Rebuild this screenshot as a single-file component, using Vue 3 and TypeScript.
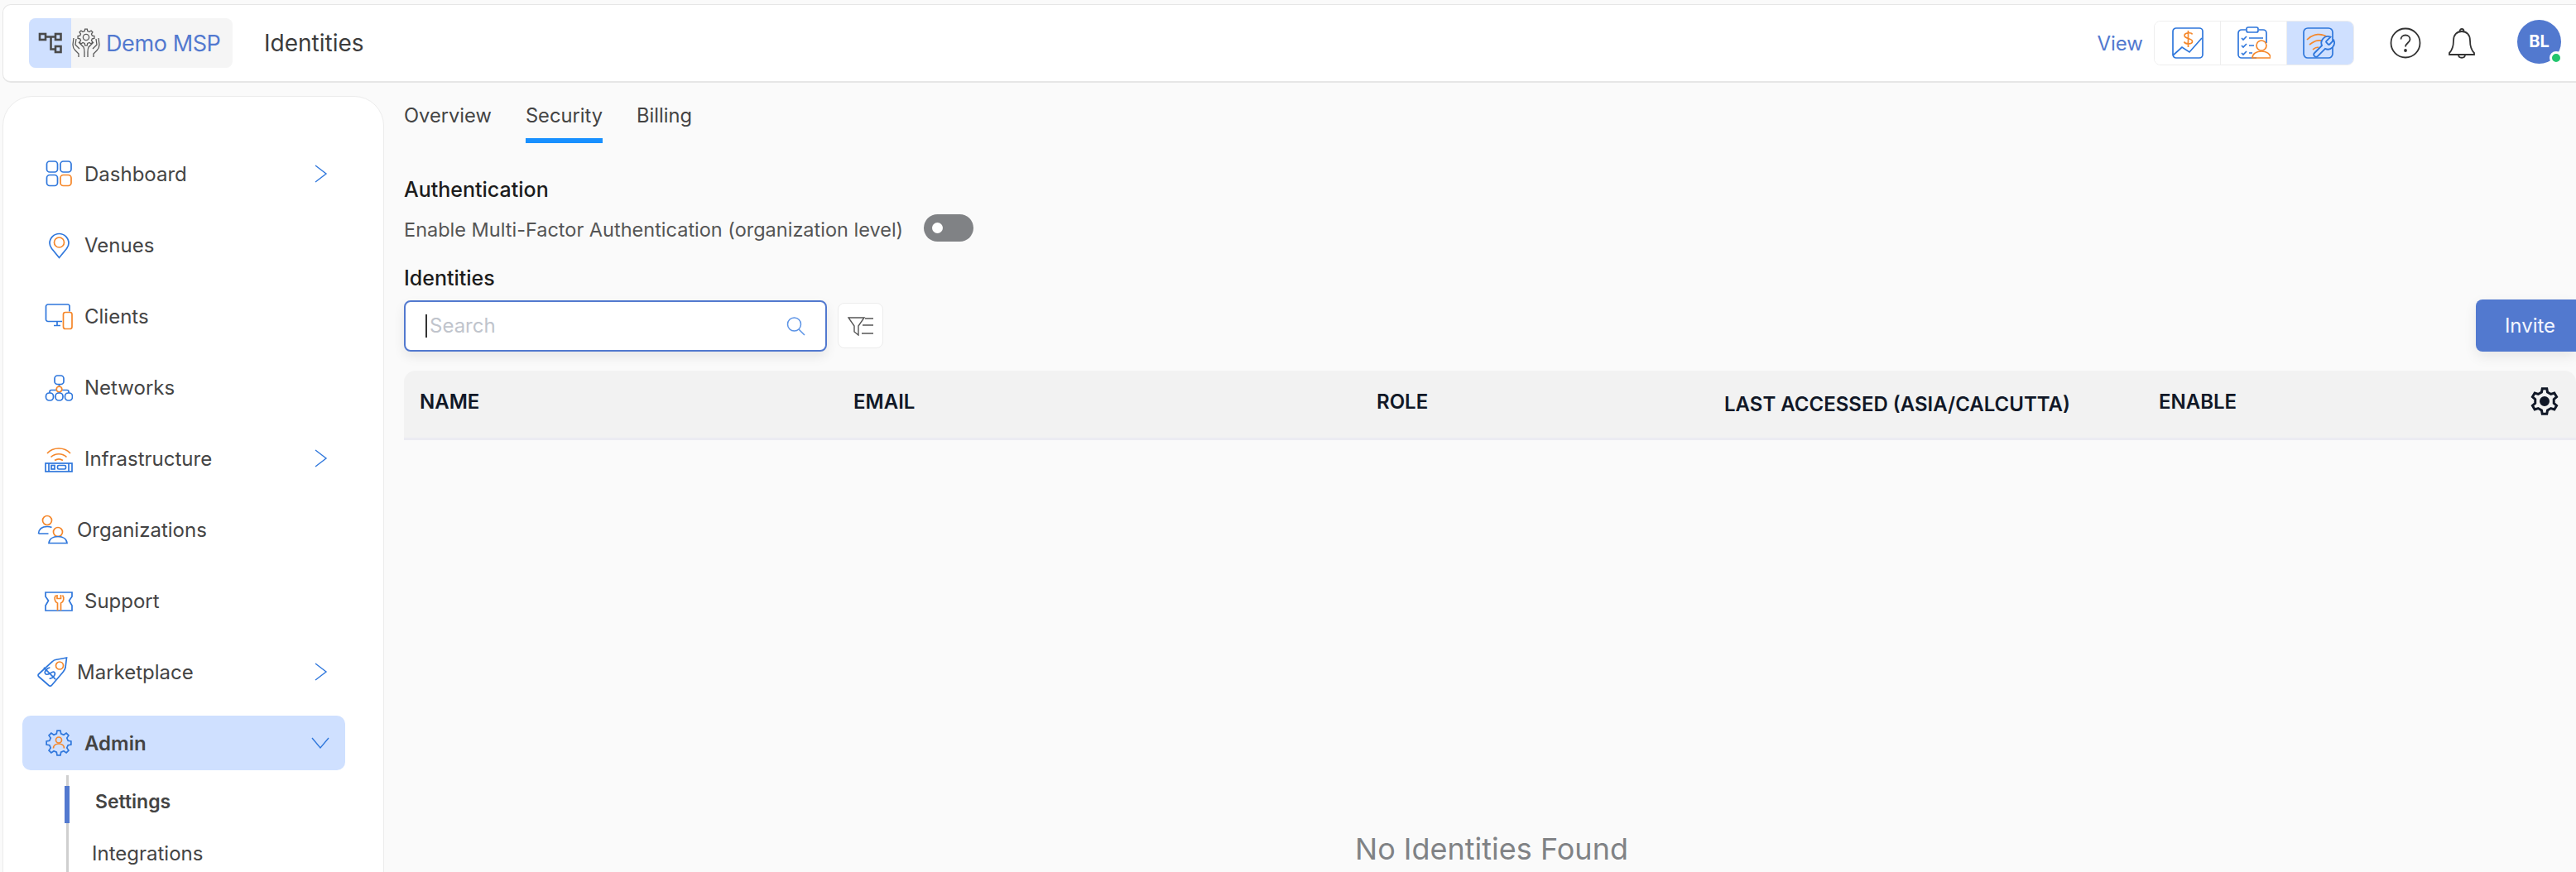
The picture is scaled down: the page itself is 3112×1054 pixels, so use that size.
<template>
  <div class="page">
    <header class="topbar">
      <div class="crumb">
        <div class="crumb-toggle">
          <svg width="30" height="26" viewBox="0 0 30 26" fill="none" stroke="#4a4a4a" stroke-width="2.6">
            <rect x="2" y="2" width="7" height="7" />
            <rect x="21" y="2" width="6.5" height="7" />
            <rect x="21" y="17" width="6.5" height="7" />
            <path d="M9 5.5H21M15.5 5.5V20.5H21" />
          </svg>
        </div>
        <svg class="crumb-logo" width="34" height="36" viewBox="0 0 34 36" fill="none" stroke="#5a5a5a" stroke-width="1.3">
          <path :d="gearPath(17, 11, 10, 7.6, 8)" />
          <circle cx="17" cy="11" r="3.6" />
          <path d="M2 12 1 20c0 3 1 5 3 7l4 4v4M5 13l-1 7 5 5M8 17l6 6c1 2 1 4 1 6v6M32 12l1 8c0 3-1 5-3 7l-4 4v4M29 13l1 7-5 5M26 17l-6 6c-1 2-1 4-1 6v6" />
        </svg>
        <span class="crumb-name">Demo MSP</span>
      </div>
      <h1 class="page-title">Identities</h1>
      <div class="topbar-right">
        <span class="view-label">View</span>
        <div class="view-group">
          <button class="view-btn">
            <svg width="38" height="40" viewBox="0 0 38 40" fill="none" stroke="#2f77dc" stroke-width="1.7">
              <rect x="1" y="2" width="36" height="36" rx="4" />
              <path d="M1 35 12 25l9 6 15-17" />
              <path d="M24.500 9.500c-1-2.500-9.500-2.500-9.500 1.500s9.500 3 9.500 7-8.500 3.500-10 .5M19.500 5v20" stroke="#f5872a" />
            </svg>
          </button>
          <button class="view-btn">
            <svg width="40" height="40" viewBox="0 0 40 40" fill="none" stroke="#2f77dc" stroke-width="1.7">
              <path d="M10 4H5a4 4 0 0 0-4 4v26a4 4 0 0 0 4 4h18M26 4h5a4 4 0 0 1 4 4v12" />
              <rect x="11" y="1" width="14" height="6" rx="2" />
              <path d="M5 14l2 2 4-4M5 23l2 2 4-4M5 32l2 2 4-4M14 14H31M14 23H20M14 32H18" />
              <circle cx="29" cy="23" r="6" stroke="#f5872a" />
              <path d="M18 38c0-5 5-8 11-8s11 3 11 8Z" stroke="#f5872a" />
            </svg>
          </button>
          <button class="view-btn active">
            <svg width="42" height="40" viewBox="0 0 42 40" fill="none" stroke="#2f77dc" stroke-width="1.7">
              <rect x="1" y="2" width="35" height="36" rx="5" />
              <path d="M5 16C13 8 23 8 30 13M8 22c6-5 12-6 17-4M12 28c2-2 4-3 7-3" stroke="#f5872a" />
              <path
                transform="translate(9.400 9.400) scale(1.3)"
                stroke-width="1.4"
                fill="#cfe0ff"
                d="M14.700 6.300a1 1 0 0 0 0 1.400l1.600 1.600a1 1 0 0 0 1.400 0l3.770-3.770a6 6 0 0 1-7.940 7.940l-6.910 6.910a2.120 2.120 0 0 1-3-3l6.910-6.910a6 6 0 0 1 7.940-7.940l-3.760 3.760z"
              />
            </svg>
          </button>
        </div>
        <svg class="help" width="38" height="38" viewBox="0 0 38 38" fill="none" stroke="#333" stroke-width="1.8">
          <circle cx="19" cy="19" r="17.500" />
          <path d="M13.500 14.500c0-3 2.500-5 5.500-5s5.500 2 5.500 5c0 4-5.500 4.500-5.500 9" />
          <circle cx="19" cy="28" r="1" fill="#333" />
        </svg>
        <svg class="bell" width="34" height="38" viewBox="0 0 34 38" fill="none" stroke="#333" stroke-width="1.8">
          <path d="M17 5c-6 0-10 4-10 11 0 7-1 11-5 15v2h30v-2c-4-4-5-8-5-15 0-7-4-11-10-11Z" />
          <path d="M14.500 5c0-4 5-4 5 0M13 33c0 5 8 5 8 0" />
        </svg>
        <div class="avatar">
          BL
          <span class="status-dot"></span>
        </div>
      </div>
    </header>

    <div class="body">
      <aside class="sidebar">
        <div
          v-for="item in navItems"
          :key="item.label"
          :class="['nav-item', { shifted: item.shifted, active: item.active }]"
        >
          <svg v-if="item.icon === 'dashboard'" class="nav-icon" viewBox="0 0 34 34" fill="none" stroke="#2f77dc" stroke-width="1.7">
            <rect x="2.500" y="2" width="13" height="13" rx="3.500" />
            <rect x="19" y="2" width="13" height="13" rx="3.500" />
            <rect x="2.500" y="18.500" width="13" height="13" rx="3.500" />
            <rect x="19" y="18.500" width="13" height="13" rx="3.500" stroke="#f5872a" />
          </svg>
          <svg v-else-if="item.icon === 'venues'" class="nav-icon" viewBox="0 0 34 34" fill="none" stroke="#2f77dc" stroke-width="1.7">
            <path d="M17.500 32.500 8.500 21.500C6.800 19.200 6 17.200 6 15a11.500 11.500 0 0 1 23 0c0 2.200-.8 4.200-2.500 6.500Z" />
            <circle cx="17.500" cy="14" r="6" stroke="#f5872a" />
          </svg>
          <svg v-else-if="item.icon === 'clients'" class="nav-icon" viewBox="0 0 34 34" fill="none" stroke="#2f77dc" stroke-width="1.7">
            <path d="M21 23.500H4a2.500 2.500 0 0 1-2.500-2.500V5.500A2.500 2.500 0 0 1 4 3h24a2.500 2.500 0 0 1 2 1.500v7" />
            <path d="M15 24v4M11 28.500h8" />
            <rect x="22.500" y="12.500" width="10.500" height="20" rx="2.500" stroke="#f5872a" />
          </svg>
          <svg v-else-if="item.icon === 'networks'" class="nav-icon" viewBox="0 0 34 34" fill="none" stroke="#2f77dc" stroke-width="1.7">
            <rect x="12" y="3" width="11" height="10.500" rx="3.500" />
            <path d="M6 24v-1.500a2 2 0 0 1 2-2h6.500M20.500 20.500H27a2 2 0 0 1 2 2V24M17.500 13.500V16M17.500 23v1" />
            <circle cx="17.500" cy="19.500" r="3.300" stroke="#f5872a" />
            <rect x="1.500" y="24" width="9" height="9" rx="4" />
            <rect x="13" y="24" width="9" height="9" rx="4" />
            <rect x="24.500" y="24" width="9" height="9" rx="4" />
          </svg>
          <svg v-else-if="item.icon === 'infrastructure'" class="nav-icon" viewBox="0 0 34 34" fill="none" stroke="#2f77dc" stroke-width="1.7">
            <path d="M3 11C10 3 24 3 31 11M7.500 15.500c5-5 14-5 19 0M12 19.500c3-2 7-2 10 0" stroke="#f5872a" />
            <rect x="1" y="23" width="32" height="10" />
            <path d="M5 23v10M29 23v10" />
            <rect x="8" y="25.500" width="4" height="4.500" />
            <rect x="15.500" y="25.500" width="10" height="4.500" rx="1.500" />
          </svg>
          <svg v-else-if="item.icon === 'organizations'" class="nav-icon wide" viewBox="0 0 37 34" fill="none" stroke="#2f77dc" stroke-width="1.7">
            <circle cx="12" cy="6" r="5.500" stroke="#f5872a" />
            <path d="M1.500 22C2 16 6 13.500 12 13.500c2 0 4 .3 5.500 1M1.500 22h12" />
            <circle cx="25" cy="20" r="5.500" stroke="#f5872a" />
            <path d="M14 33.500c.5-5 5-8 11-8s10.500 3 11 8Z" />
          </svg>
          <svg v-else-if="item.icon === 'support'" class="nav-icon" viewBox="0 0 34 34" fill="none" stroke="#2f77dc" stroke-width="1.7">
            <path d="M1 7H33V12L29.500 17 33 23V29H1V23L4.500 17 1 12Z" />
            <path d="M13.500 10.500c-2.500 3-1.500 8 2 9.500v9M21.500 10.500c2.500 3 1.500 8-2 9.500v9M15 10v4.500h4.500V10" stroke="#f5872a" />
          </svg>
          <svg v-else-if="item.icon === 'marketplace'" class="nav-icon wide" viewBox="0 0 37 36" fill="none" stroke="#2f77dc" stroke-width="1.7">
            <path d="M35.500 1 22 3.500c-1.500.3-2.500 1-3.500 2L2 20.500c-1.300 1-1.300 2.500 0 3.500l12 10.500c1.300 1 2.500 1 3.500-.3L31 18.500c1.500-1.700 2.500-3.500 3-5.500Z" />
            <circle cx="27" cy="10.500" r="4.500" stroke="#f5872a" />
            <g transform="rotate(-45 15 20)">
              <path d="M20 15.500c-1-2-9-2.500-9 1.500s9 2.500 9 6-8 4-9.500 1M15 10v20" />
            </g>
          </svg>
          <svg v-else-if="item.icon === 'admin'" class="nav-icon" viewBox="0 0 34 34" fill="none" stroke="#2f77dc" stroke-width="1.7">
            <path :d="gearPath(17, 17, 15, 11.500, 8)" />
            <circle cx="17" cy="13.500" r="3.500" stroke="#f5872a" />
            <path d="M10.500 23.500c0-3.500 3-5.500 6.500-5.500s6.500 2 6.500 5.500" stroke="#f5872a" />
          </svg>
          <span class="nav-label">{{ item.label }}</span>
          <svg v-if="item.chevron === 'right'" class="chevron" width="22" height="24" viewBox="0 0 22 24" fill="none" stroke="#2f77dc" stroke-width="1.4">
            <path d="M5 2 18 12 5 22" />
          </svg>
          <svg v-else-if="item.chevron === 'down'" class="chevron" width="22" height="24" viewBox="0 0 22 24" fill="none" stroke="#2f77dc" stroke-width="1.4">
            <path d="M1 6 11 18 21 6" />
          </svg>
        </div>
        <div class="sub-nav">
          <div class="sub-item current">Settings</div>
          <div class="sub-item">Integrations</div>
        </div>
      </aside>

      <main class="content">
        <nav class="tabs">
          <span v-for="tab in tabs" :key="tab" :class="['tab', { selected: tab === activeTab }]">{{ tab }}</span>
        </nav>
        <h2 class="section-title">Authentication</h2>
        <div class="mfa-row">
          <span class="mfa-label">Enable Multi-Factor Authentication (organization level)</span>
          <span class="switch"><span class="switch-knob"></span></span>
        </div>
        <h2 class="section-title identities">Identities</h2>
        <div class="toolbar">
          <div class="search">
            <span class="caret"></span>
            <input class="search-input" type="text" placeholder="Search" />
            <svg width="24" height="24" viewBox="0 0 24 24" fill="none" stroke="#5b93e6" stroke-width="1.5">
              <circle cx="10.500" cy="10" r="8" />
              <path d="M16 16l7 7" />
            </svg>
          </div>
          <button class="filter-btn">
            <svg width="32" height="24" viewBox="0 0 32 24" fill="none" stroke="#555" stroke-width="1.4">
              <path d="M1 2H20L13 12V23L8 19V12Z" />
              <path d="M21 3H31M18 11H31M17 21H31" />
            </svg>
          </button>
          <button class="invite-btn">Invite</button>
        </div>
        <div class="table-head">
          <span class="col-name">NAME</span>
          <span class="col-email">EMAIL</span>
          <span class="col-role">ROLE</span>
          <span class="col-access">LAST ACCESSED (ASIA/CALCUTTA)</span>
          <span class="col-enable">ENABLE</span>
          <svg class="table-gear" width="34" height="34" viewBox="0 0 34 34" fill="none" stroke="#111827" stroke-width="3">
            <path :d="gearPath(17, 17, 15.500, 11.500, 6)" />
            <circle cx="17" cy="17" r="4.500" fill="#111827" />
          </svg>
        </div>
        <div class="empty">No Identities Found</div>
      </main>
    </div>
  </div>
</template>

<script setup lang="ts">
interface NavItem {
  label: string;
  icon: string;
  chevron?: 'right' | 'down';
  shifted?: boolean;
  active?: boolean;
}

const navItems: NavItem[] = [
  { label: 'Dashboard', icon: 'dashboard', chevron: 'right' },
  { label: 'Venues', icon: 'venues' },
  { label: 'Clients', icon: 'clients' },
  { label: 'Networks', icon: 'networks' },
  { label: 'Infrastructure', icon: 'infrastructure', chevron: 'right' },
  { label: 'Organizations', icon: 'organizations', shifted: true },
  { label: 'Support', icon: 'support' },
  { label: 'Marketplace', icon: 'marketplace', chevron: 'right', shifted: true },
  { label: 'Admin', icon: 'admin', chevron: 'down', active: true }
];

const tabs = ['Overview', 'Security', 'Billing'];
const activeTab = 'Security';

// cog outline, used by the logo, the admin item and the table settings
function gearPath(cx: number, cy: number, outer: number, inner: number, teeth: number): string {
  const step = (Math.PI * 2) / teeth;
  const parts: string[] = [];
  for (let i = 0; i < teeth; i++) {
    const a = i * step - Math.PI / 2;
    const points: [number, number][] = [
      [inner, a - step * 0.3],
      [outer, a - step * 0.17],
      [outer, a + step * 0.17],
      [inner, a + step * 0.3]
    ];
    for (const [r, t] of points) {
      const x = (cx + r * Math.cos(t)).toFixed(2);
      const y = (cy + r * Math.sin(t)).toFixed(2);
      parts.push(`${parts.length ? 'L' : 'M'}${x} ${y}`);
    }
  }
  return parts.join(' ') + ' Z';
}
</script>

<style>
html,
body {
  margin: 0;
  background: #fafafa;
}
</style>

<style scoped>
.page {
  height: 1054px;
  overflow: hidden;
  background: #fafafa;
  font-family: Inter, "Liberation Sans", sans-serif;
  color: #444;
  box-sizing: border-box;
  padding-top: 5px;
}

.topbar {
  height: 95px;
  margin-left: 3px;
  box-sizing: border-box;
  display: flex;
  align-items: center;
  background: #fff;
  border: 1px solid #e6e6e6;
  border-bottom-width: 2px;
  border-right: none;
  border-radius: 10px 0 0 10px;
  padding-left: 31px;
}

.crumb {
  display: flex;
  align-items: center;
  width: 246px;
  height: 60px;
  background: #f5f5f5;
  border-radius: 8px;
  overflow: hidden;
}

.crumb-toggle {
  width: 51px;
  height: 100%;
  background: #cfe0ff;
  display: flex;
  align-items: center;
  justify-content: center;
}

.crumb-logo {
  margin-left: 1px;
}

.crumb-name {
  margin-left: 7px;
  font-size: 27px;
  color: #5279cf;
  letter-spacing: -0.4px;
}

.page-title {
  margin: 0 0 0 38px;
  font-size: 28px;
  font-weight: 400;
  color: #3c3c3c;
}

.topbar-right {
  margin-left: auto;
  display: flex;
  align-items: center;
}

.view-label {
  font-size: 24px;
  color: #5279cf;
  margin-right: 13px;
}

.view-group {
  display: flex;
  height: 54px;
  box-sizing: border-box;
  border: 1px solid #eee;
  border-radius: 8px;
  overflow: hidden;
  background: #fff;
}

.view-btn {
  width: 80px;
  border: none;
  border-right: 1px solid #eee;
  background: #fff;
  padding: 0;
  display: flex;
  align-items: center;
  justify-content: center;
}

.view-btn.active {
  background: #cfe0ff;
  border-right: none;
}

.help {
  margin-left: 43px;
}

.bell {
  margin-left: 32px;
}

.avatar {
  position: relative;
  width: 53px;
  height: 53px;
  margin: -4px 18px 0 50px;
  border-radius: 50%;
  background: #5279cf;
  color: #fff;
  font-size: 20px;
  font-weight: 700;
  display: flex;
  align-items: center;
  justify-content: center;
}

.status-dot {
  position: absolute;
  right: -2px;
  bottom: -1px;
  width: 10px;
  height: 10px;
  border: 3px solid #fff;
  border-radius: 50%;
  background: #22c56e;
}

.body {
  display: flex;
  margin-top: 16px;
}

.sidebar {
  flex: none;
  width: 461px;
  height: 960px;
  margin-left: 3px;
  box-sizing: border-box;
  padding: 60px 0 0 23px;
  background: #fff;
  border: 1px solid #ececec;
  border-radius: 36px 36px 0 0;
}

.nav-item {
  position: relative;
  display: flex;
  align-items: center;
  gap: 14px;
  width: 390px;
  height: 66px;
  margin-bottom: 20px;
  box-sizing: border-box;
  padding-left: 27px;
  border-radius: 10px;
  font-size: 24px;
}

.nav-item.shifted {
  padding-left: 18px;
  gap: 11px;
}

.nav-item.active {
  background: #cfe0ff;
  font-weight: 600;
  margin-bottom: 6px;
}

.nav-icon {
  flex: none;
  width: 34px;
  height: 34px;
}

.nav-icon.wide {
  width: 37px;
  height: 36px;
}

.chevron {
  position: absolute;
  left: 349px;
  top: 21px;
}

.sub-nav {
  margin-left: 53px;
  border-left: 3px solid #cfcfcf;
  padding-top: 13px;
  height: 200px;
}

.sub-item {
  position: relative;
  height: 45px;
  margin-bottom: 14px;
  padding-left: 28px;
  display: flex;
  align-items: center;
  font-size: 24px;
}

.sub-item.current {
  box-sizing: border-box;
  padding-left: 32px;
  padding-bottom: 7px;
  font-size: 23px;
  font-weight: 600;
}

.sub-item.current::before {
  content: "";
  position: absolute;
  left: -5px;
  top: 0;
  width: 6px;
  height: 45px;
  background: #5279cf;
}

.content {
  flex: 1;
  min-width: 0;
  padding-left: 24px;
}

.tabs {
  display: flex;
  gap: 41px;
  height: 57px;
}

.tab {
  font-size: 23.7px;
  height: 57px;
  box-sizing: border-box;
  padding-top: 9px;
}

.tab.selected {
  border-bottom: 6px solid #1890ff;
}

.section-title {
  margin: 41px 0 0;
  font-size: 25px;
  line-height: 30px;
  font-weight: 500;
  color: #1c1c1c;
}

.section-title.identities {
  margin-top: 29px;
}

.mfa-row {
  display: flex;
  align-items: center;
  gap: 25px;
  margin-top: 15px;
  height: 33px;
  font-size: 23.5px;
  color: #555;
}

.mfa-label {
  padding-top: 3px;
}

.switch {
  width: 60px;
  height: 33px;
  border-radius: 17px;
  background: #808285;
  display: flex;
  align-items: center;
  padding-left: 10px;
  box-sizing: border-box;
}

.switch-knob {
  width: 13px;
  height: 13px;
  border-radius: 50%;
  background: #fff;
}

.toolbar {
  display: flex;
  align-items: center;
  margin-top: 11px;
}

.search {
  width: 511px;
  height: 62px;
  box-sizing: border-box;
  display: flex;
  align-items: center;
  padding: 0 24px 0 24px;
  background: #fff;
  border: 2px solid #5279cf;
  border-radius: 8px;
  box-shadow: 0 6px 14px rgba(0, 0, 0, 0.08);
}

.caret {
  flex: none;
  width: 2px;
  height: 28px;
  background: #333;
}

.search-input {
  flex: 1;
  min-width: 0;
  border: none;
  outline: none;
  background: transparent;
  padding: 0 0 0 3px;
  font: inherit;
  font-size: 24px;
}

.search-input::placeholder {
  color: #c0c4cc;
}

.filter-btn {
  width: 55px;
  height: 55px;
  margin-left: 13px;
  padding: 0;
  border: 1px solid #ececec;
  border-radius: 8px;
  background: #fff;
  display: flex;
  align-items: center;
  justify-content: center;
}

.invite-btn {
  width: 121px;
  height: 63px;
  margin-left: auto;
  border: none;
  border-radius: 8px 0 0 8px;
  padding: 0 0 0 10px;
  background: #5279cf;
  color: #f4f7ff;
  font: inherit;
  font-size: 24px;
  box-shadow: 0 6px 16px rgba(0, 0, 0, 0.08);
}

.table-head {
  position: relative;
  display: flex;
  align-items: center;
  height: 84px;
  margin-top: 23px;
  padding-bottom: 6px;
  box-sizing: border-box;
  background: #f2f2f2;
  border-bottom: 3px solid #ebebf2;
  border-radius: 14px 14px 0 0;
  font-size: 24px;
  font-weight: 600;
  color: #111827;
}

.table-head span {
  flex: none;
}

.col-name {
  width: 524px;
  margin-left: 19px;
}

.col-email {
  width: 632px;
}

.col-role {
  width: 420px;
}

.col-access {
  width: 525px;
  padding-top: 6px;
}

.table-gear {
  position: absolute;
  right: 21px;
  top: 20px;
}

.empty {
  margin-top: 472px;
  padding-left: 4px;
  text-align: center;
  font-size: 36px;
  color: #808285;
}
</style>
